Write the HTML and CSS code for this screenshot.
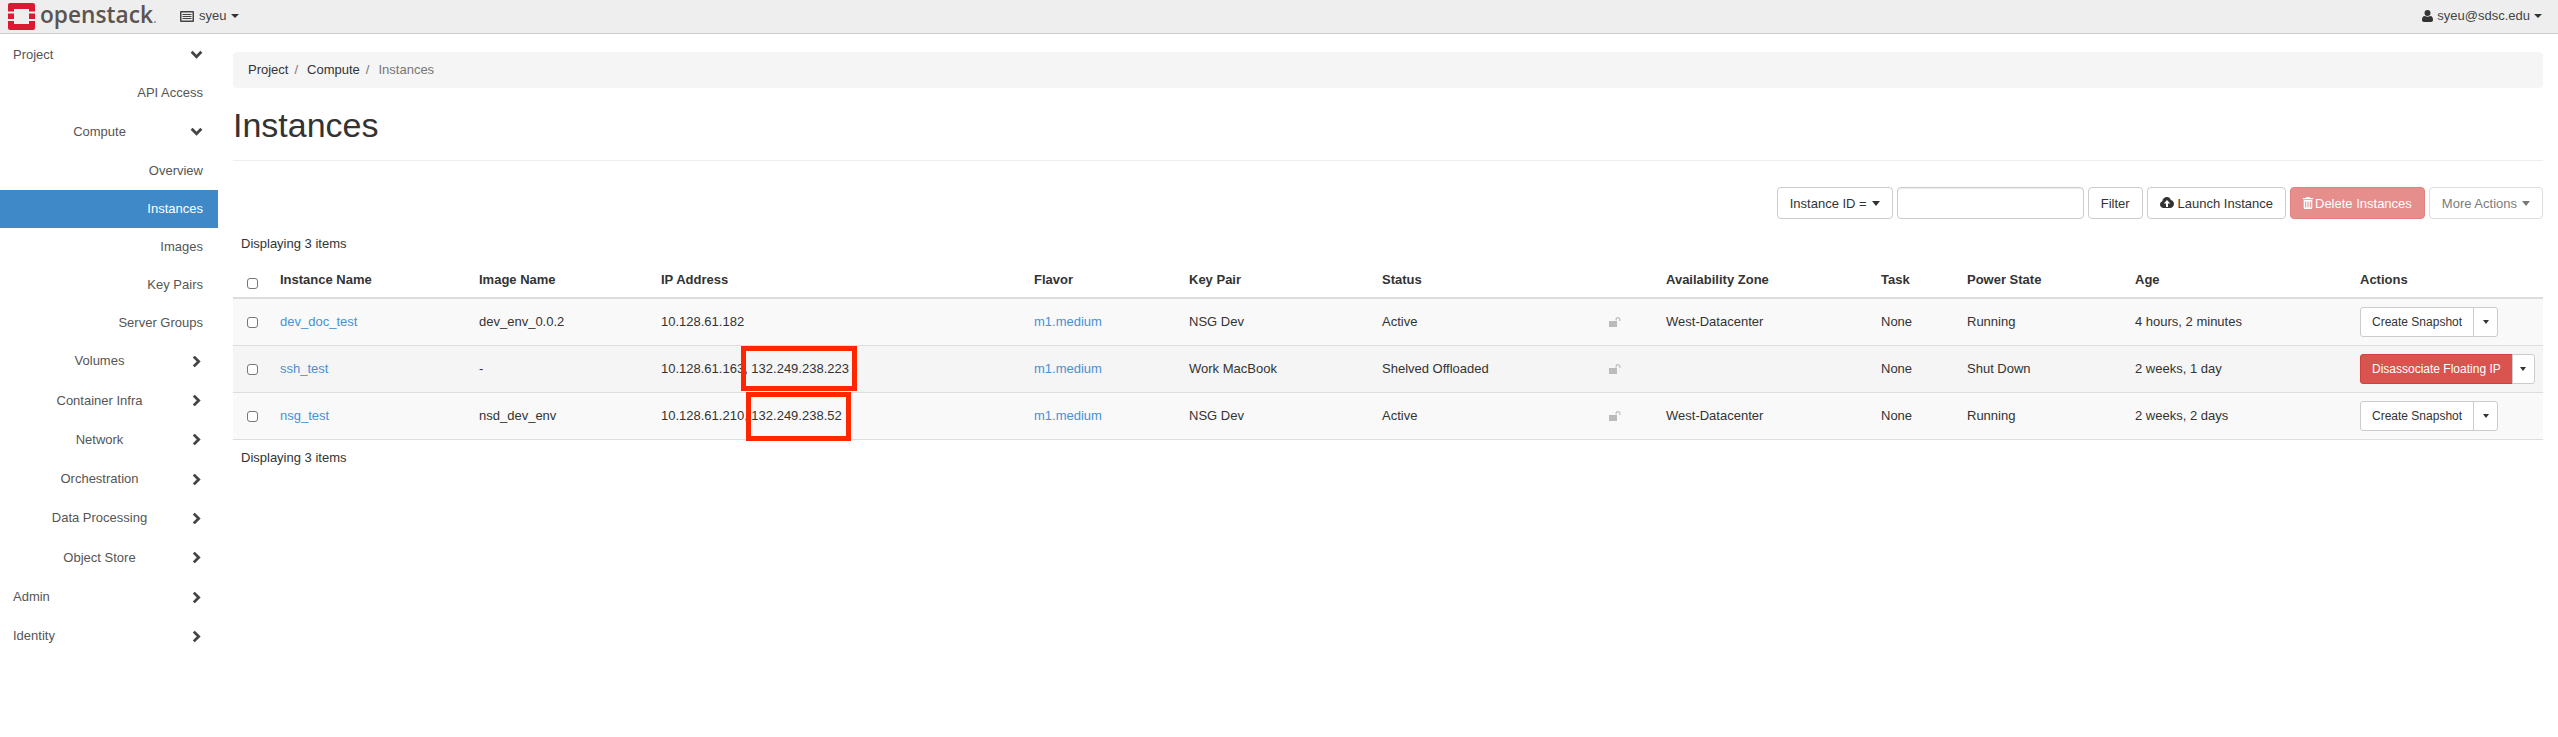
FILE: index.html
```html
<!DOCTYPE html>
<html>
<head>
  <title>Instances</title>
  <link rel="stylesheet" href="styles.css">
</head>
<body>
  <div class="topbar">
    <a class="logo">
      <svg class="logo-mark" viewBox="0 0 27 27" width="27" height="27">
        <path fill="#da1a32" d="M2 0h23a2 2 0 0 1 2 2v6.5h-6V6H6v2.5H0V2a2 2 0 0 1 2-2z"/>
        <path fill="#da1a32" d="M0 10.5h6v5.500H0zM21 10.5h6v5.500h-6z"/>
        <path fill="#da1a32" d="M0 18h6v3h15v-3h6v7a2 2 0 0 1-2 2H2a2 2 0 0 1-2-2z"/>
      </svg>
      <span class="logo-text">openstack<span class="logo-dot">.</span></span>
    </a>
    <div class="project-picker">
      <svg viewBox="0 0 14 11" width="14" height="11"><path fill="#444" d="M1 0h12a1 1 0 0 1 1 1v9a1 1 0 0 1-1 1H1a1 1 0 0 1-1-1V1a1 1 0 0 1 1-1zm.5 1.500v8h11v-8zM2.500 3h9v1h-9zm0 2h9v1h-9zm0 2h9v1h-9z"/></svg>
      <span>syeu</span><span class="caret"></span>
    </div>
    <div class="user-menu">
      <svg viewBox="0 0 11 12" width="11" height="12"><path fill="#333" d="M5.500 0a3 3 0 0 1 3 3 3 3 0 0 1-6 0 3 3 0 0 1 3-3zM2.800 6c.8.500 1.700.800 2.700.800s1.900-.300 2.700-.800C10 6 11 7.500 11 10c0 1.300-.8 2-2 2H2c-1.200 0-2-.7-2-2 0-2.500 1-4 2.800-4z"/></svg>
      <span>syeu@sdsc.edu</span><span class="caret"></span>
    </div>
  </div>

  <div class="layout">
    <nav class="sidebar">
      <a class="nav-item nav-top">Project<svg class="chev" viewBox="0 0 12 12"><path d="M1.500 3.500l4.500 4.500 4.500-4.500"/></svg></a>
      <a class="nav-item nav-leaf">API Access</a>
      <a class="nav-item nav-group"><span class="nav-label">Compute</span><svg class="chev" viewBox="0 0 12 12"><path d="M1.500 3.500l4.500 4.500 4.500-4.500"/></svg></a>
      <a class="nav-item nav-leaf">Overview</a>
      <a class="nav-item nav-leaf active">Instances</a>
      <a class="nav-item nav-leaf">Images</a>
      <a class="nav-item nav-leaf">Key Pairs</a>
      <a class="nav-item nav-leaf">Server Groups</a>
      <a class="nav-item nav-group"><span class="nav-label">Volumes</span><svg class="chev" viewBox="0 0 12 12"><path d="M3.500 1.500l4.500 4.500-4.500 4.500"/></svg></a>
      <a class="nav-item nav-group"><span class="nav-label">Container Infra</span><svg class="chev" viewBox="0 0 12 12"><path d="M3.500 1.500l4.500 4.500-4.500 4.500"/></svg></a>
      <a class="nav-item nav-group"><span class="nav-label">Network</span><svg class="chev" viewBox="0 0 12 12"><path d="M3.500 1.500l4.500 4.500-4.500 4.500"/></svg></a>
      <a class="nav-item nav-group"><span class="nav-label">Orchestration</span><svg class="chev" viewBox="0 0 12 12"><path d="M3.500 1.500l4.500 4.500-4.500 4.500"/></svg></a>
      <a class="nav-item nav-group"><span class="nav-label">Data Processing</span><svg class="chev" viewBox="0 0 12 12"><path d="M3.500 1.500l4.500 4.500-4.500 4.500"/></svg></a>
      <a class="nav-item nav-group"><span class="nav-label">Object Store</span><svg class="chev" viewBox="0 0 12 12"><path d="M3.500 1.500l4.500 4.500-4.500 4.500"/></svg></a>
      <a class="nav-item nav-top">Admin<svg class="chev" viewBox="0 0 12 12"><path d="M3.500 1.500l4.500 4.500-4.500 4.500"/></svg></a>
      <a class="nav-item nav-top">Identity<svg class="chev" viewBox="0 0 12 12"><path d="M3.500 1.500l4.500 4.500-4.500 4.500"/></svg></a>
    </nav>

    <main class="content">
      <ol class="breadcrumb">
        <li>Project</li>
        <li class="sep">/</li>
        <li>Compute</li>
        <li class="sep">/</li>
        <li class="current">Instances</li>
      </ol>
      <h1 class="page-title">Instances</h1>

      <div class="toolbar">
        <button class="btn">Instance ID =<span class="caret caret-sm"></span></button>
        <input class="filter-input" type="text">
        <button class="btn">Filter</button>
        <button class="btn">
          <svg viewBox="0 0 14 12" width="14" height="12"><path fill="#333" d="M7 0c1.900 0 3.400 1.300 3.800 3.100C12.600 3.400 14 5 14 7c0 2.200-1.800 4-4 4H3.500C1.600 11 0 9.400 0 7.500 0 6 .9 4.700 2.300 4.200 2.500 1.900 4.500 0 7 0zM7 3L3.800 6.500H6V10h2V6.500h2.200z"/></svg>
          Launch Instance
        </button>
        <button class="btn btn-danger btn-off btn-tight">
          <svg viewBox="0 0 10 12" width="10" height="12"><path fill="#fff" d="M3.500 0h3l.5 1h3v1.200H0V1h3zM.7 3h8.600v8a1 1 0 0 1-1 1H1.700a1 1 0 0 1-1-1zm1.500 1.500V10.500h1V4.500zm2.300 0V10.500h1V4.500zm2.300 0V10.500h1V4.500z"/></svg>
          Delete Instances
        </button>
        <button class="btn btn-off">More Actions<span class="caret caret-sm"></span></button>
      </div>

      <div class="count">Displaying 3 items</div>

      <table class="instances">
        <colgroup>
          <col class="c-check"><col class="c-name"><col class="c-image"><col class="c-ip"><col class="c-flavor"><col class="c-key">
          <col class="c-status"><col class="c-lock"><col class="c-az"><col class="c-task"><col class="c-power"><col class="c-age"><col class="c-actions">
        </colgroup>
        <thead>
          <tr>
            <th><span class="check"></span></th>
            <th>Instance Name</th><th>Image Name</th><th>IP Address</th><th>Flavor</th><th>Key Pair</th>
            <th>Status</th><th></th><th>Availability Zone</th><th>Task</th><th>Power State</th><th>Age</th><th>Actions</th>
          </tr>
        </thead>
        <tbody>
          <tr>
            <td><span class="check"></span></td>
            <td><a>dev_doc_test</a></td><td>dev_env_0.0.2</td><td>10.128.61.182</td><td><a>m1.medium</a></td><td>NSG Dev</td>
            <td>Active</td>
            <td><svg class="lock" viewBox="0 0 12 10"><path d="M0 4h8v6H0zM6.500 3.500V2.500a2.500 2.500 0 0 1 5 0V4h-1.200V2.500a1.300 1.300 0 0 0-2.600 0v1z"/></svg></td>
            <td>West-Datacenter</td><td>None</td><td>Running</td><td>4 hours, 2 minutes</td>
            <td><div class="split"><button class="btn btn-sm">Create Snapshot</button><button class="btn btn-sm btn-drop"><span class="caret caret-xs"></span></button></div></td>
          </tr>
          <tr>
            <td><span class="check"></span></td>
            <td><a>ssh_test</a></td><td>-</td><td>10.128.61.163, <span class="mark mark-wide">132.249.238.223</span></td><td><a>m1.medium</a></td><td>Work MacBook</td>
            <td>Shelved Offloaded</td>
            <td><svg class="lock" viewBox="0 0 12 10"><path d="M0 4h8v6H0zM6.500 3.500V2.500a2.500 2.500 0 0 1 5 0V4h-1.200V2.500a1.300 1.300 0 0 0-2.600 0v1z"/></svg></td>
            <td></td><td>None</td><td>Shut Down</td><td>2 weeks, 1 day</td>
            <td><div class="split"><button class="btn btn-sm btn-danger">Disassociate Floating IP</button><button class="btn btn-sm btn-drop"><span class="caret caret-xs"></span></button></div></td>
          </tr>
          <tr>
            <td><span class="check"></span></td>
            <td><a>nsg_test</a></td><td>nsd_dev_env</td><td>10.128.61.210, <span class="mark mark-low">132.249.238.52</span></td><td><a>m1.medium</a></td><td>NSG Dev</td>
            <td>Active</td>
            <td><svg class="lock" viewBox="0 0 12 10"><path d="M0 4h8v6H0zM6.500 3.500V2.500a2.500 2.500 0 0 1 5 0V4h-1.200V2.500a1.300 1.300 0 0 0-2.600 0v1z"/></svg></td>
            <td>West-Datacenter</td><td>None</td><td>Running</td><td>2 weeks, 2 days</td>
            <td><div class="split"><button class="btn btn-sm">Create Snapshot</button><button class="btn btn-sm btn-drop"><span class="caret caret-xs"></span></button></div></td>
          </tr>
        </tbody>
      </table>

      <div class="count count-foot">Displaying 3 items</div>
    </main>
  </div>
</body>
</html>
```

FILE: styles.css
```css
* {
  box-sizing: border-box;
}

body {
  margin: 0;
  font-family: "Liberation Sans", Arial, sans-serif;
  font-size: 13px;
  line-height: 18px;
  color: #333;
  background: #fff;
}

/* top bar */
.topbar {
  display: flex;
  align-items: center;
  height: 34px;
  padding: 0 16px 1px 8px;
  background: #eee;
  border-bottom: 1px solid #ccc;
}

.logo {
  display: flex;
  align-items: center;
  width: 172px;
  height: 27px;
}

.logo-mark {
  flex: none;
}

.logo-text {
  margin-left: 5px;
  font-family: "Open Sans", sans-serif;
  font-size: 22.7px;
  font-weight: 600;
  line-height: 27px;
  color: #5a5452;
}

.logo-dot {
  font-size: 14px;
  color: #999;
}

.project-picker,
.user-menu {
  display: flex;
  align-items: center;
  gap: 5px;
  color: #444;
}

.user-menu {
  gap: 4px;
  margin-left: auto;
}

.caret {
  display: inline-block;
  width: 0;
  height: 0;
  border-top: 4px solid #333;
  border-left: 4px solid transparent;
  border-right: 4px solid transparent;
}

.caret-sm {
  margin-left: 1px;
  border-top-width: 5px;
}

.caret-xs {
  border-left-width: 3.5px;
  border-right-width: 3.5px;
}

/* sidebar */
.layout {
  display: flex;
}

.sidebar {
  flex: none;
  width: 218px;
  padding-top: 1px;
}

.nav-item {
  display: flex;
  align-items: center;
  height: 39.3px;
  color: #555;
}

.nav-top {
  justify-content: space-between;
  padding: 0 15px 0 13px;
}

.nav-label {
  flex: none;
  width: 199px;
  text-align: center;
}

.nav-group .chev {
  margin-left: -9px;
}

.nav-leaf {
  justify-content: flex-end;
  height: 38px;
  padding-right: 15px;
}

.nav-item.active {
  background: #3f89c9;
  color: #fff;
}

.chev {
  flex: none;
  width: 13px;
  height: 13px;
  fill: none;
  stroke: #444;
  stroke-width: 2.6;
}

/* content */
.content {
  flex: 1;
  min-width: 0;
  padding: 18px 15px 0;
}

.breadcrumb {
  display: flex;
  align-items: center;
  gap: 6px;
  height: 36px;
  margin: 0;
  padding: 0 15px;
  list-style: none;
  background: #f5f5f5;
  border-radius: 4px;
}

.breadcrumb .sep {
  margin-right: 3px;
  color: #777;
}

.breadcrumb .current {
  color: #777;
}

.page-title {
  height: 73px;
  margin: 0;
  padding-top: 18px;
  font-size: 34px;
  font-weight: 500;
  line-height: 38px;
  color: #333;
  border-bottom: 1px solid #eee;
}

.toolbar {
  display: flex;
  justify-content: flex-end;
  gap: 4px;
  margin-top: 26px;
}

.btn {
  display: inline-flex;
  align-items: center;
  justify-content: center;
  gap: 4px;
  height: 32px;
  padding: 0 12px;
  font-family: inherit;
  font-size: 13px;
  color: #333;
  background: #fff;
  border: 1px solid #ccc;
  border-radius: 4px;
}

.btn-tight {
  gap: 2px;
}

.btn-danger {
  color: #fff;
  background: #d9534f;
  border-color: #d43f3a;
}

.btn-off {
  opacity: 0.65;
}

.filter-input {
  width: 187px;
  height: 32px;
  border: 1px solid #ccc;
  border-radius: 4px;
  box-shadow: inset 0 1px 1px rgba(0, 0, 0, 0.075);
}

.count {
  height: 18px;
  margin-top: 16px;
  padding-left: 8px;
}

.count-foot {
  margin-top: 9px;
}

/* table */
.instances {
  width: 2310px;
  margin-top: 11px;
  table-layout: fixed;
  border-collapse: collapse;
}

.c-check { width: 39px; }
.c-name { width: 199px; }
.c-image { width: 182px; }
.c-ip { width: 373px; }
.c-flavor { width: 155px; }
.c-key { width: 193px; }
.c-status { width: 226px; }
.c-lock { width: 58px; }
.c-az { width: 215px; }
.c-task { width: 86px; }
.c-power { width: 168px; }
.c-age { width: 225px; }
.c-actions { width: 191px; }

.instances th {
  height: 34px;
  padding: 4px 8px 8px;
  text-align: left;
  vertical-align: bottom;
  font-weight: 700;
  border-bottom: 2px solid #ddd;
}

.instances td {
  height: 47px;
  padding: 0 8px;
  background: #f9f9f9;
  border-bottom: 1px solid #ddd;
  white-space: nowrap;
}

.instances tbody tr:nth-child(2) td {
  background: #f5f5f5;
}

.instances a {
  color: #4a90d2;
}

.check {
  display: block;
  width: 11px;
  height: 11px;
  margin: 2px 0 0 6px;
  background: #fff;
  border: 1px solid #777;
  border-radius: 3px;
}

.instances th .check {
  margin-top: 0;
}

.lock {
  display: block;
  width: 12px;
  height: 10px;
  margin-left: 1px;
  fill: #bbb;
}

.split {
  display: flex;
}

.btn-sm {
  height: 30px;
  padding: 0 11px;
  font-size: 12px;
  border-radius: 3px 0 0 3px;
}

.btn-drop {
  width: 25px;
  padding: 0;
  margin-left: -1px;
  background: #fff;
  border-radius: 0 3px 3px 0;
}

/* red annotation boxes drawn over the screenshot */
.mark {
  position: relative;
}

.mark::after {
  content: "";
  position: absolute;
  border: 5px solid #ff2600;
}

.mark-wide::after {
  left: -10px;
  right: -8px;
  top: -15px;
  bottom: -15px;
}

.mark-low::after {
  left: -5px;
  right: -9px;
  top: -16px;
  bottom: -18px;
}
```
